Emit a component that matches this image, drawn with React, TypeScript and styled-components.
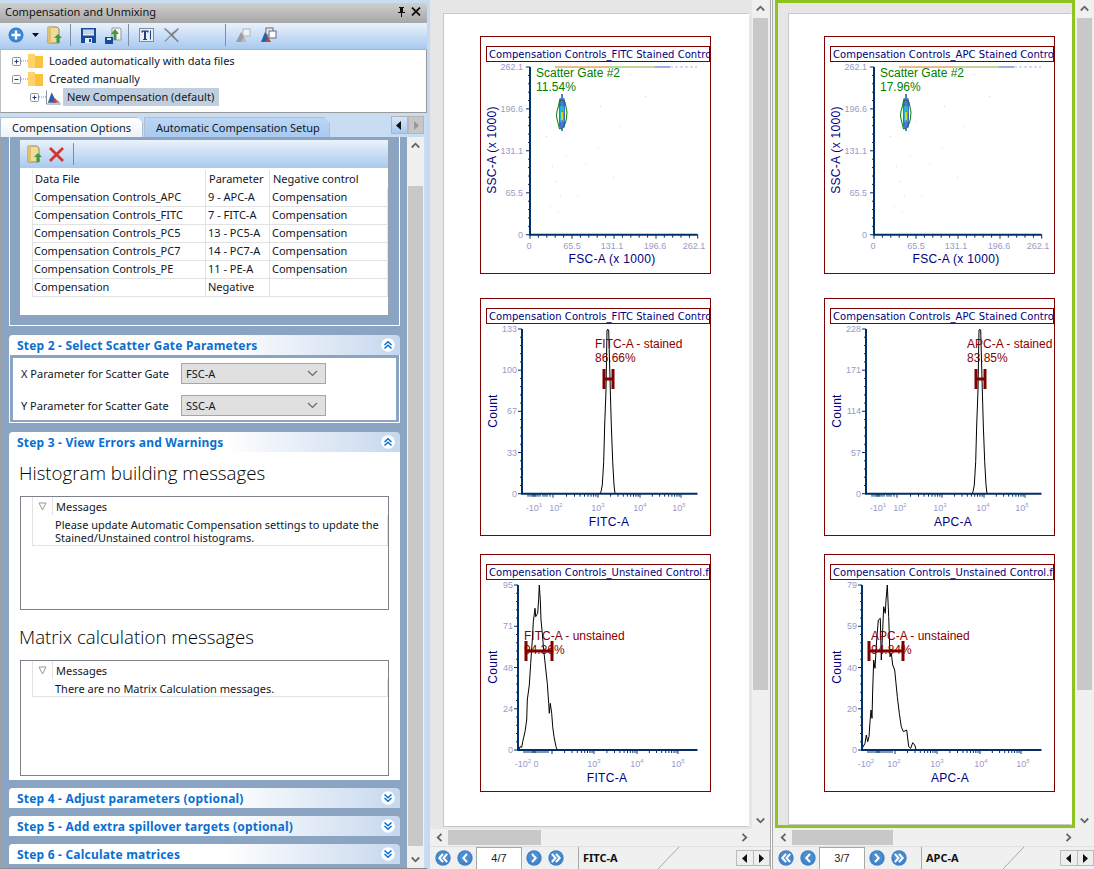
import React from "react";
import styled, { createGlobalStyle } from "styled-components";

const Global = createGlobalStyle`
  html, body { margin: 0; padding: 0; width: 1094px; height: 869px; overflow: hidden; background: #e6e6e6; }
  * { box-sizing: border-box; }
`;

const UI = `"Noto Sans", "Open Sans", sans-serif`;
const STEEL = "#8aa4c2";

const Shell = styled.div`
  display: flex; width: 1094px; height: 869px; overflow: hidden;
  font-family: ${UI}; font-size: 11px; color: #101828;
`;

/* ---------- left panel ---------- */
const LeftPanel = styled.div`
  width: 427px; height: 869px; flex: none; display: flex; flex-direction: column;
  padding-top: 3px; background: #c8dcf2;
`;
const TitleBar = styled.div`
  height: 20px; flex: none; display: flex; align-items: center; justify-content: space-between;
  padding: 0 6px 3px 5px; background: linear-gradient(#cfcfcf, #a6a6a6); color: #111; font-size: 11px;
`;
const TitleIcons = styled.div`display: flex; gap: 5px; align-items: center;`;
const Toolbar = styled.div`
  height: 27px; flex: none; display: flex; align-items: center; padding: 0 0 2px 7px;
  background: linear-gradient(#e9f2fc, #a9c9ef); border-bottom: 1px solid #9db8d8;
`;
const ToolSlot = styled.div<{ $w: number }>`
  width: ${p => p.$w}px; height: 22px; flex: none; display: flex; align-items: center; justify-content: center;
`;
const ToolSep = styled.div<{ $ml?: number; $mr?: number }>`
  width: 1px; height: 22px; flex: none; background: #7f8fa3;
  margin: 0 ${p => p.$mr ?? 0}px 0 ${p => p.$ml ?? 0}px;
`;
const Tree = styled.div`
  height: 63px; flex: none; background: #fff; border: 1px solid #9a9a9a; border-top: 0; border-left-color: #c0c0c0;
  padding-top: 2px;
`;
const TreeRow = styled.div<{ $indent: number }>`
  height: 18px; display: flex; align-items: center; padding-left: ${p => p.$indent}px;
`;
const TreeText = styled.span<{ $sel?: boolean }>`
  height: 18px; line-height: 17px; font-size: 11px; color: #101828;
  padding: 0 ${p => (p.$sel ? "5px" : "3px")} 0 ${p => (p.$sel ? "4px" : "3px")};
  margin-left: ${p => (p.$sel ? "2px" : "3px")};
  background: ${p => (p.$sel ? "#c0cfdf" : "transparent")};
`;
const TabStrip = styled.div`
  height: 21px; flex: none; margin-top: 3px; display: flex; align-items: flex-end; position: relative;
`;
const Tab = styled.div<{ $active?: boolean; $w: number }>`
  width: ${p => p.$w}px; height: 20px; flex: none; padding-left: 11px; line-height: 20px; font-size: 11px; color: #101828;
  margin-right: 1px; border: 1px solid #aebfd4; border-bottom: 0;
  clip-path: polygon(0 0, calc(100% - 6px) 0, 100% 6px, 100% 100%, 0 100%);
  background: ${p => (p.$active ? "linear-gradient(#bcd6f3, #a9c9ef)" : "linear-gradient(#fff, #eef3f9)")};
`;
const TabArrows = styled.div`
  position: absolute; right: 3px; top: 0; width: 33px; height: 18px; display: flex;
`;
const TabArrow = styled.div<{ $on?: boolean }>`
  width: 17px; height: 18px; display: flex; align-items: center; justify-content: center;
  background: ${p => (p.$on ? "linear-gradient(#d6e6f8,#a9c9ef)" : "#c6c6c6")};
  border: 1px solid #b4b4b4;
`;
const SidebarBody = styled.div`
  flex: 1; min-height: 0; display: flex; background: ${STEEL}; border-left: 1px solid #a0a0a0; border-bottom: 1px solid #8a8a8a;
`;
const StepColumn = styled.div`
  width: 406px; flex: none; padding: 0 7px 0 8px; display: flex; flex-direction: column; overflow: hidden;
`;
const Step1 = styled.div`
  height: 189px; flex: none; border: 1px solid #fff; border-top: 0; padding: 3px 10px 0 9px;
`;
const Step1Panel = styled.div`
  height: 176px; background: #fff; border: 1px solid #9aa4b0; border-top: 0; display: flex; flex-direction: column;
`;
const PanelBar = styled.div`
  height: 28px; flex: none; display: flex; align-items: center; padding-left: 7px; gap: 6px;
  background: linear-gradient(#e9f2fc, #a9c9ef);
`;
const FileTable = styled.table`
  border-collapse: collapse; table-layout: fixed; width: 356px; margin: 2px 0 0 12px; font-size: 11px; color: #101828;
`;
const Cell = styled.td<{ $w?: number }>`
  ${p => (p.$w ? `width: ${p.$w}px;` : "")} height: 18px; padding: 0 0 0 2px; line-height: 16px; white-space: nowrap; overflow: hidden;
  border-right: 1px solid #e2e2e2; border-bottom: 1px solid #e2e2e2;
  &:first-child { border-left: 1px solid #e2e2e2; padding-left: 1px; }
`;
const HeadCell = styled(Cell)`
  padding-left: 3px; border-bottom: 0; font-weight: 400; text-align: left;
  &:first-child { border-left: 1px solid #eee; padding-left: 2px; } &:last-child { border-right: 0; }
`;
const StepHeader = styled.div<{ $mt: number }>`
  height: 20px; flex: none; margin-top: ${p => p.$mt}px; padding: 0 5px 0 8px; display: flex; align-items: center; justify-content: space-between;
  border-radius: 4px 4px 0 0; background: linear-gradient(90deg, #fff 0%, #fff 55%, #c6d8ee 100%);
  color: #0a6fd0; font-weight: 700; font-size: 12px; letter-spacing: .2px;
`;
const Step2Body = styled.div`
  height: 68px; flex: none; padding: 3px 3px 3px; border: 1px solid #fff; border-top: 0;
`;
const Step2Inner = styled.div`
  background: #fff; height: 62px; padding: 5px 0 0 8px; display: flex; flex-direction: column; gap: 11px;
`;
const ParamRow = styled.div`display: flex; align-items: center; height: 21px; font-size: 11px;`;
const ParamLabel = styled.div`width: 160px; flex: none;`;
const FakeSelect = styled.div`
  width: 145px; height: 21px; background: #e0e0e0; border: 1px solid #a6a6a6; padding: 0 7px 0 4px;
  display: flex; align-items: center; justify-content: space-between; font-size: 11px;
`;
const Step3Body = styled.div`
  height: 328px; flex: none; background: #fff; padding: 9px 11px 0 10px;
`;
const Heading = styled.div<{ $mt?: number }>`
  font-family: "Open Sans", "Noto Sans", sans-serif; font-weight: 300; font-size: 18.7px; line-height: 24px; color: #000;
  margin-top: ${p => p.$mt ?? 0}px; height: 24px; white-space: nowrap;
`;
const MsgBox = styled.div<{ $h: number }>`
  height: ${p => p.$h}px; margin: 11px 0 0 1px; border: 1px solid #80808a; padding-left: 11px;
`;
const MsgHead = styled.div`
  height: 18px; display: flex; align-items: center; border-left: 1px solid #e2e2e2;
`;
const MsgTri = styled.div`
  width: 20px; height: 18px; flex: none; display: flex; align-items: center; justify-content: center; border-right: 1px solid #e2e2e2;
`;
const MsgTitle = styled.div`padding-left: 3px; font-size: 11px;`;
const MsgText = styled.div`
  padding: 3px 0 1px 22px; line-height: 13px; font-size: 11px; border-left: 1px solid #e2e2e2; border-right: 1px solid #e2e2e2;
  border-bottom: 1px solid #e2e2e2; min-height: 18px;
`;
const SideScroll = styled.div`
  width: 17px; flex: none; margin-left: 0; background: #f0f0f0; display: flex; flex-direction: column; align-items: center;
`;
const ScrollBtn = styled.div<{ $h?: number }>`
  height: ${p => p.$h ?? 17}px; width: 100%; flex: none; display: flex; align-items: center; justify-content: center;
`;
const SideThumb = styled.div`
  width: 15px; height: 660px; background: #c8c8c8; flex: none; margin-top: 32px;
`;
const LeftEdge = styled.div`width: 3px; flex: none; background: #c8dcf2;`;

/* ---------- right documents ---------- */
const Docs = styled.div`flex: 1; display: flex; background: #f0f0f0; border-left: 3px solid #c4d9f2;`;
const Doc = styled.div<{ $w: number }>`
  width: ${p => p.$w}px; flex: none; height: 869px; display: flex; flex-direction: column;
`;
const DocTop = styled.div`height: 829px; flex: none; display: flex;`;
const PageArea = styled.div<{ $selected?: boolean; $w: number; $ml?: number }>`
  width: ${p => p.$w}px; height: ${p => (p.$selected ? 828 : 829)}px; flex: none; background: #e6e6e6;
  margin-left: ${p => p.$ml ?? 0}px; padding: ${p => (p.$selected ? "10px 0 0 10px" : "13px 3px 2px 13px")};
  border: ${p => (p.$selected ? "3px solid #8fc31f" : "0")};
`;
const Page = styled.div<{ $pl: number }>`
  height: 100%; background: #fff; border: 1px solid #c8c8c8; border-right-color: #fff; padding: 22px 0 0 ${p => p.$pl}px; overflow: hidden;
`;
const VScroll = styled.div<{ $ml: number }>`
  width: 17px; flex: none; margin-left: ${p => p.$ml}px; background: #f0f0f0; display: flex; flex-direction: column;
`;
const VThumb = styled.div`height: 672px; width: 15px; margin-left: 1px; margin-top: 1px; background: #c8c8c8; flex: none;`;
const VFill = styled.div`flex: 1;`;
const HScroll = styled.div`height: 17px; flex: none; display: flex; align-items: center; background: #f0f0f0; position: relative;`;
const HBtn = styled.div<{ $ml?: number }>`
  width: 17px; flex: none; height: 17px; margin-left: ${p => p.$ml ?? 0}px; display: flex; align-items: center; justify-content: center;
`;
const HThumb = styled.div<{ $w: number }>`width: ${p => p.$w}px; height: 15px; flex: none; background: #c8c8c8;`;
const HFill = styled.div`flex: 1;`;
const Nav = styled.div`
  height: 23px; flex: none; display: flex; align-items: stretch; padding-left: 2px; background: #f0f0f0; border-top: 1px solid #e0e0e0;
`;
const NavSlot = styled.div`width: 22px; flex: none; display: flex; align-items: center; justify-content: center;`;
const PageField = styled.div`
  width: 46px; flex: none; margin-right: 1px; background: #fff; border: 1px solid #a8a8a8; border-bottom: 0; text-align: center; line-height: 20px; font-size: 11px; color: #222;
  font-family: "Liberation Sans", sans-serif;
`;
const SheetLabel = styled.div<{ $w: number }>`
  width: ${p => p.$w}px; flex: none; margin-left: 11px; padding-left: 4px; border-left: 1px solid #a8a8a8; font-weight: 700; font-size: 11px; line-height: 22px; color: #111;
`;
const Diag = styled.svg`flex: none;`;
const NavSpacer = styled.div`flex: 1;`;
const SheetArrows = styled.div`width: 34px; height: 16px; flex: none; margin-top: 3px; display: flex; border: 1px solid #bbb; background: #eee;`;
const SheetArrow = styled.div`flex: 1; display: flex; align-items: center; justify-content: center; & + & { border-left: 1px solid #bbb; }`;
const Divider = styled.div`width: 3px; flex: none; background: linear-gradient(90deg, #a8a8a8 0 1px, #fff 1px 2px, #a8a8a8 2px);`;

/* ---------- plots ---------- */
const PlotFrame = styled.div<{ $mt: number }>`
  width: 231px; height: 238px; margin-top: ${p => p.$mt}px; border: 1px solid #800000; padding-top: 9px;
  display: flex; flex-direction: column; overflow: hidden; background: #fff;
`;
const PlotTitle = styled.div`
  height: 16px; flex: none; margin-left: 5px; border: 1px solid #800000; padding: 1px 0 0 2px;
  font-family: "DejaVu Sans", sans-serif; font-size: 10px; line-height: 14px; color: #000080; white-space: nowrap; overflow: hidden; letter-spacing: 0.04px;
`;
const ChartSvg = styled.svg`display: block; flex: none; font-family: "Liberation Sans", Arial, sans-serif;`;

/* ---------- icons ---------- */
const PlusIcon = () => (
  <svg width="16" height="16" viewBox="0 0 16 16">
    <circle cx="8" cy="8" r="7.5" fill="#2f78c4" />
    <circle cx="8" cy="8" r="6.6" fill="#3f8ad6" />
    <path d="M3.5 8h9M8 3.5v9" stroke="#fff" strokeWidth="2.4" />
  </svg>
);
const Caret = () => (
  <svg width="7" height="4" viewBox="0 0 7 4"><path d="M0 0h7L3.5 4z" fill="#111" /></svg>
);
const OpenDoc = () => (
  <svg width="16" height="18" viewBox="0 0 16 18">
    <path d="M1 1h9l2 2v14H1z" fill="#f0dc98" stroke="#9a8a50" />
    <path d="M1 1h3v16H1z" fill="#e0c070" />
    <path d="M11 8l4 4h-2.5v5h-3v-5H7z" fill="#3c9a46" />
  </svg>
);
const SaveIcon = () => (
  <svg width="15" height="15" viewBox="0 0 15 15">
    <path d="M0 0h15v15H0z" fill="#1a4a9c" />
    <path d="M2 1.5h11v6H2z" fill="#dfe8f5" />
    <path d="M2 3h11M2 5h11" stroke="#9ab" strokeWidth=".7" />
    <path d="M4 10h7v5H4z" fill="#dfe8f5" />
    <path d="M8 11h2v3H8z" fill="#1a4a9c" />
  </svg>
);
const ExportIcon = () => (
  <svg width="17" height="17" viewBox="0 0 17 17">
    <path d="M7 1h8l1 1v11H7z" fill="#f4f4f4" stroke="#999" />
    <path d="M0 10h8v7H0z" fill="#1a4a9c" />
    <path d="M2 11h4v2H2z" fill="#dfe8f5" />
    <path d="M10 2l4 5h-2.5v6h-3V7H6z" fill="#3c9a46" />
  </svg>
);
const TextIcon = () => (
  <svg width="15" height="14" viewBox="0 0 15 14">
    <rect x=".5" y=".5" width="14" height="13" fill="#e8eef6" stroke="#7f8c9c" />
    <path d="M2.5 2.5h7v2h-1.3V3.8H7V11h1v1H4v-1h1V3.8H3.8v.7H2.500z" fill="#1f3f80" />
    <path d="M11.500 2.500v9" stroke="#1f3f80" />
  </svg>
);
const GrayX = () => (
  <svg width="15" height="14" viewBox="0 0 15 14"><path d="M1 0l6.500 5.500L14 0l1 1-6 6 6 6.500-1.500.5-6.500-6-6 6L.5 13l6-6L0 1z" fill="#808488" /></svg>
);
const GrayShape = () => (
  <svg width="16" height="15" viewBox="0 0 16 15">
    <rect x="8" y="1" width="7" height="7" fill="#f2f2f2" stroke="#b0b4b8" />
    <path d="M1 14L6 4l3 5 2 5z" fill="#9a9ea2" />
    <path d="M6 14l3-5 2 5z" fill="#bcbcbc" />
  </svg>
);
const ColorShape = () => (
  <svg width="17" height="16" viewBox="0 0 17 16">
    <rect x="6" y="1" width="7" height="7" fill="#eee" stroke="#667" />
    <rect x="9" y="4" width="7" height="7" fill="#fff" stroke="#667" />
    <path d="M1 15L5 5l3 5 2 5z" fill="#2d5fa8" />
    <path d="M5 15l3-5 3 5z" fill="#c8413a" />
  </svg>
);
const RedX = () => (
  <svg width="15" height="15" viewBox="0 0 15 15"><path d="M1 1l13 13M14 1L1 14" stroke="#d8322a" strokeWidth="2.800" /></svg>
);
const TreeSvg = styled.svg`flex: none;`;
const Expander = ({ minus }: { minus?: boolean }) => (
  <TreeSvg width="16" height="18" viewBox="0 0 16 18">
    <path d="M9 9h7" stroke="#888" strokeDasharray="1 1" />
    <rect x=".5" y="5.500" width="8" height="8" fill="#f8fafc" stroke="#8a94a8" rx="1" />
    <path d="M2.500 9.500h4" stroke="#223a70" />
    {!minus && <path d="M4.500 7.500v4" stroke="#223a70" />}
  </TreeSvg>
);
const Folder = () => (
  <TreeSvg width="15" height="14" viewBox="0 0 15 14">
    <path d="M0 0h6l1 2h8v12H0z" fill="#fcc23d" />
    <path d="M0 0h7v14H0z" fill="#fdd36a" />
  </TreeSvg>
);
const CompIcon = () => (
  <TreeSvg width="15" height="16" viewBox="0 0 16 16">
    <path d="M.5 1v14.500H16" stroke="#789" fill="none" />
    <path d="M2 14L6 3l3 6 2 5z" fill="#2d5fa8" />
    <path d="M7 14l2.500-5 4 5z" fill="#c8413a" />
    <path d="M11 14l1-3 3 3z" fill="#7a9ad0" />
  </TreeSvg>
);
const Chevrons = ({ up }: { up?: boolean }) => (
  <svg width="14" height="14" viewBox="0 0 14 14">
    <circle cx="7" cy="7" r="6.800" fill="#fff" />
    <g transform={up ? undefined : "rotate(180 7 7)"} stroke="#0a6fd0" strokeWidth="1.500" fill="none">
      <path d="M3.500 7l3.500-3.200L10.500 7" />
      <path d="M3.500 10.500L7 7.300l3.500 3.200" />
    </g>
  </svg>
);
const Arrow = ({ dir, c = "#666" }: { dir: "u" | "d" | "l" | "r"; c?: string }) => {
  const rot = { u: 0, r: 90, d: 180, l: 270 }[dir];
  return (
    <svg width="9" height="9" viewBox="0 0 9 9">
      <path transform={`rotate(${rot} 4.500 4.500)`} d="M.8 6.500L4.500 2.700l3.700 3.800" fill="none" stroke={c} strokeWidth="1.800" />
    </svg>
  );
};
const SolidArrow = ({ left, c = "#111" }: { left?: boolean; c?: string }) => (
  <svg width="6" height="9" viewBox="0 0 6 9"><path d={left ? "M5 0v9L0 4.500z" : "M1 0v9l5-4.500z"} fill={c} /></svg>
);
const NavCircle = ({ dbl, left }: { dbl?: boolean; left?: boolean }) => (
  <svg width="16" height="16" viewBox="0 0 16 16">
    <circle cx="8" cy="8" r="7.700" fill="#3f82c8" />
    <circle cx="8" cy="7" r="5.500" fill="#5a9ad8" opacity=".5" />
    <g transform={left ? "rotate(180 8 8)" : undefined} stroke="#fff" strokeWidth="2" fill="none">
      {dbl ? (
        <>
          <path d="M3.800 3.800L7.500 8l-3.700 4.200" />
          <path d="M8 3.800L11.700 8 8 12.200" />
        </>
      ) : (
        <path d="M6 3.800L9.700 8 6 12.200" />
      )}
    </g>
  </svg>
);

/* ---------- chart data ---------- */
const NAVY = "#003068";
const TICK = "#9a9ac8";
const AXT = "#000080";

type Pt = [number, number];
const toStr = (pts: Pt[], ox: number, oy: number, dx = 0) =>
  pts.map(([x, y]) => `${(x / 3 + ox + dx).toFixed(1)},${(y / 3 + oy).toFixed(1)}`).join(" ");

const spike: Pt[] = [[390, 611], [393, 605], [397, 585], [401, 515], [404, 405], [408, 300], [411, 120], [414, 118], [416, 120], [421, 300], [424, 405], [428, 515], [432, 585], [435, 611]];
const bellL: Pt[] = [[147, 598], [150, 590], [155, 592], [158, 575], [165, 545], [170, 510], [172, 450], [178, 405], [182, 340], [187, 270], [190, 215], [195, 175], [197, 200], [203, 190], [206, 145], [208, 105], [211, 150], [213, 210], [217, 250], [221, 300], [226, 345], [232, 400], [236, 460], [238, 490], [241, 460], [245, 490], [248, 530], [252, 560], [258, 590], [261, 598]];
const bellR: Pt[] = [[125, 598], [135, 580], [139, 555], [143, 575], [147, 560], [150, 515], [153, 480], [156, 505], [158, 420], [161, 330], [165, 355], [170, 270], [175, 210], [181, 205], [184, 330], [188, 240], [191, 170], [196, 190], [198, 150], [202, 105], [206, 200], [210, 320], [214, 310], [218, 345], [224, 360], [228, 400], [232, 440], [238, 490], [244, 530], [250, 545], [260, 540], [266, 590], [272, 595], [278, 578], [284, 585], [288, 598]];

const dots: Pt[] = [[88, 44], [150, 38], [120, 70], [84, 95], [72, 130], [75, 145], [97, 160], [133, 141], [105, 128], [118, 112], [70, 170], [80, 160], [165, 60], [66, 100], [78, 175], [92, 85], [140, 90], [86, 120]];

const TickLabel = styled.text`font-size: 9px; fill: ${TICK};`;
const AxisTitle = styled.text`font-size: 12px; fill: ${AXT}; letter-spacing: .3px;`;

const Ticks = ({ x, top, bottom, xEnd, xMajor, xMinor }: { x: number; top: number; bottom: number; xEnd: number; xMajor: number[]; xMinor: number[] }) => {
  const d: string[] = [];
  const step = (bottom - top) / 4;
  for (let i = 0; i <= 20; i++) {
    const y = top + (i * step) / 5;
    d.push(`M${x - (i % 5 === 0 ? 4 : 2)} ${y.toFixed(1)}h${i % 5 === 0 ? 4 : 2}`);
  }
  xMajor.forEach(v => d.push(`M${v} ${bottom}v4`));
  xMinor.forEach(v => d.push(`M${v.toFixed(1)} ${bottom}v3`));
  return (
    <>
      <path d={d.join("")} stroke={NAVY} strokeWidth="1" fill="none" />
      <path d={`M${x} ${top}V${bottom}H${xEnd}`} stroke={NAVY} strokeWidth="2" fill="none" />
    </>
  );
};

const Scatter = ({ x, pct }: { x: string; pct: string }) => {
  const majors = [50, 92, 134, 176, 217.7];
  const minors: number[] = [];
  majors.slice(0, -1).forEach((m, i) => { for (let k = 1; k < 5; k++) minors.push(m + (k * (majors[i + 1] - m)) / 5); });
  return (
    <>
      {dots.map(([a, b], i) => <rect key={i} x={a} y={b} width="1" height="1" fill="#d4d4e4" />)}
      <path d="M75 31H130" stroke="#d87818" strokeWidth="1" />
      <path d="M130 31H175" stroke="#88a838" strokeWidth="1" />
      <path d="M175 31H190" stroke="#3060c8" strokeWidth="1" />
      <path d="M190 31H217" stroke="#a8b8e0" strokeWidth="1" strokeDasharray="3 2" />
      <Ticks x={50} top={31} bottom={198.7} xEnd={217.7} xMajor={majors} xMinor={minors} />
      <rect x="79" y="62" width="6" height="30" rx="2" fill="#4466d8" />
      <rect x="81" y="58" width="2" height="37" fill="#5577d8" />
      <rect x="80" y="70" width="4" height="16" fill="#22b8c8" />
      <rect x="81" y="76" width="2" height="8" fill="#e0d020" />
      <path d="M82 64l3 2 1 5 1 5-.5 6-1 5-3 5-3 1-1-4-1-4-1-5 .5-5 1.500-5 1-5z" fill="none" stroke="#008000" strokeWidth="1" />
      <text x="56" y="41" fontSize="12" fill="#008000">Scatter Gate #2</text>
      <text x="56" y="55" fontSize="12" fill="#008000">{pct}</text>
      {[["262.1", 34], ["196.6", 76], ["131.1", 118], ["65.5", 160], ["0", 202]].map(([t, y]) => (
        <TickLabel key={t as string} x={43} y={y as number} textAnchor="end">{t}</TickLabel>
      ))}
      {[["0", 49], ["65.5", 92], ["131.1", 132], ["196.6", 175], ["262.1", 214]].map(([t, a]) => (
        <TickLabel key={t as string} x={a as number} y={213} textAnchor="middle">{t}</TickLabel>
      ))}
      <AxisTitle x="132" y="227" textAnchor="middle">{x} (x 1000)</AxisTitle>
      <AxisTitle transform="translate(16 114) rotate(-90)" textAnchor="middle">SSC-A (x 1000)</AxisTitle>
    </>
  );
};

const logMinor = (a: number, b: number) => [2, 3, 4, 5, 6, 7, 8, 9].map(n => a + Math.log10(n) * (b - a));

type HistCfg = {
  axisX: number; bottom: number; yLabels: string[];
  xLabels: { t: string; e?: string; x: number }[];
  xTitle: string; xTitleX: number; points: string;
  label: string; pct: string; labelX: number; labelY: number;
  m0: number; m1: number; mY: number; majors: number[]; lead: number[];
};

const Hist = ({ c }: { c: HistCfg }) => {
  const top = 31;
  const minors = [...c.lead];
  c.majors.slice(0, -1).forEach((m, i) => minors.push(...logMinor(m, c.majors[i + 1])));
  const st = (c.bottom - top) / 4;
  return (
    <>
      <polyline points={c.points} fill="none" stroke="#000" strokeWidth="1" />
      <Ticks x={c.axisX} top={top} bottom={c.bottom} xEnd={217.5} xMajor={c.majors} xMinor={minors} />
      <text x={c.labelX} y={c.labelY} fontSize="12" fill="#8b0000">{c.label}</text>
      <text x={c.labelX} y={c.labelY + 14} fontSize="12" fill="#8b0000">{c.pct}</text>
      <path d={`M${c.m0} ${c.mY - 10}v20M${c.m1} ${c.mY - 10}v20`} stroke="#800000" strokeWidth="3" />
      <path d={`M${c.m0} ${c.mY}H${c.m1}`} stroke="#800000" strokeWidth="3" />
      {c.yLabels.map((t, i) => (
        <TickLabel key={t} x={c.axisX - 5} y={top + i * st + 3} textAnchor="end">{t}</TickLabel>
      ))}
      {c.xLabels.map(l => (
        <TickLabel key={l.t + l.x} x={l.x} y={c.bottom + 17} textAnchor="middle">
          {l.t}
          {l.e && <tspan fontSize="6" dy="-4">{l.e}</tspan>}
        </TickLabel>
      ))}
      <AxisTitle x={c.xTitleX} y={c.bottom + 32} textAnchor="middle">{c.xTitle}</AxisTitle>
      <AxisTitle transform={`translate(17 ${top + 82}) rotate(-90)`} textAnchor="middle">Count</AxisTitle>
    </>
  );
};

const Plot = ({ title, mt, children }: { title: string; mt: number; children: React.ReactNode }) => (
  <PlotFrame $mt={mt}>
    <PlotTitle>{title}</PlotTitle>
    <ChartSvg width="229" height="211" viewBox="1 26 229 211">{children}</ChartSvg>
  </PlotFrame>
);

const lead2 = [48, 50, 52, 53, 54, 55, 56, 58, 60, 63, 65, 67, 70];
const histFitcS: HistCfg = {
  axisX: 42, bottom: 195.7, yLabels: ["133", "100", "67", "33", "0"],
  xLabels: [{ t: "-10", e: "1", x: 54 }, { t: "10", e: "2", x: 76 }, { t: "10", e: "3", x: 118 }, { t: "10", e: "4", x: 160 }, { t: "10", e: "5", x: 199 }],
  xTitle: "FITC-A", xTitleX: 129, points: toStr(spike, 470 - 480, 290 - 298),
  label: "FITC-A - stained", pct: "86.66%", labelX: 115, labelY: 50,
  m0: 124, m1: 133, mY: 81, majors: [73, 118, 160, 201], lead: lead2,
};
const histApcS: HistCfg = {
  ...histFitcS, yLabels: ["228", "171", "114", "57", "0"],
  xLabels: [{ t: "-10", e: "1", x: 54 }, { t: "10", e: "2", x: 76 }, { t: "10", e: "3", x: 116 }, { t: "10", e: "4", x: 159 }, { t: "10", e: "5", x: 198 }],
  xTitle: "APC-A", xTitleX: 129, points: toStr(spike, 470 - 480, 290 - 298, 28),
  label: "APC-A - stained", pct: "83.85%", labelX: 143, m0: 152, m1: 161,
};
const histFitcU: HistCfg = {
  axisX: 38, bottom: 196, yLabels: ["95", "71", "48", "24", "0"],
  xLabels: [{ t: "-10", e: "2", x: 43 }, { t: "0", x: 56 }, { t: "10", e: "3", x: 114 }, { t: "10", e: "4", x: 157 }, { t: "10", e: "5", x: 198 }],
  xTitle: "FITC-A", xTitleX: 127, points: toStr(bellL, 470 - 480, 550 - 554),
  label: "FITC-A - unstained", pct: "94.36%", labelX: 44, labelY: 86,
  m0: 46, m1: 72, mY: 97, majors: [72, 114, 157, 198], lead: [44, 46, 48, 50, 52, 53, 54, 55, 56, 58, 60, 62, 64, 66, 68],
};
const histApcU: HistCfg = {
  ...histFitcU, yLabels: ["79", "59", "40", "20", "0"],
  xLabels: [{ t: "-10", e: "2", x: 42 }, { t: "10", e: "2", x: 70 }, { t: "10", e: "3", x: 113 }, { t: "10", e: "4", x: 157 }, { t: "10", e: "5", x: 199 }],
  xTitle: "APC-A", xTitleX: 126, points: toStr(bellR, 820 - 824, 550 - 554),
  label: "APC-A - unstained", pct: "94.84%", labelX: 47, m0: 45, m1: 79, majors: [71, 113, 156, 197],
};

const rows = [
  ["Compensation Controls_APC", "9 - APC-A", "Compensation"],
  ["Compensation Controls_FITC", "7 - FITC-A", "Compensation"],
  ["Compensation Controls_PC5", "13 - PC5-A", "Compensation"],
  ["Compensation Controls_PC7", "14 - PC7-A", "Compensation"],
  ["Compensation Controls_PE", "11 - PE-A", "Compensation"],
  ["Compensation", "Negative", ""],
];

const Tri = () => (
  <svg width="9" height="9" viewBox="0 0 9 9"><path d="M1 1h7L4.500 8z" fill="none" stroke="#999" /></svg>
);
const ChevDown = () => (
  <svg width="11" height="7" viewBox="0 0 11 7"><path d="M1 1l4.500 4.500L10 1" fill="none" stroke="#666" strokeWidth="1.200" /></svg>
);

const DocNav = ({ page, label, lw, diag }: { page: string; label: string; lw: number; diag: number }) => (
  <Nav>
    <NavSlot><NavCircle dbl left /></NavSlot>
    <NavSlot><NavCircle left /></NavSlot>
    <PageField>{page}</PageField>
    <NavSlot><NavCircle /></NavSlot>
    <NavSlot><NavCircle dbl /></NavSlot>
    <SheetLabel $w={lw}>{label}</SheetLabel>
    <Diag width={diag} height="22" viewBox={`0 0 ${diag} 22`}><path d={`M0 22L${diag} 0`} stroke="#a8a8a8" /></Diag>
    <NavSpacer />
    <SheetArrows>
      <SheetArrow><SolidArrow left /></SheetArrow>
      <SheetArrow><SolidArrow /></SheetArrow>
    </SheetArrows>
  </Nav>
);

export default function App() {
  return (
    <Shell>
      <Global />
      <LeftPanel>
        <TitleBar>
          <span>Compensation and Unmixing</span>
          <TitleIcons>
            <svg width="9" height="10" viewBox="0 0 9 10"><path d="M2 0h5v1H6v4h2v1H5v4H4V6H1V5h2V1H2z" fill="#111" /></svg>
            <svg width="10" height="9" viewBox="0 0 10 9"><path d="M1 .5l8 8M9 .5l-8 8" stroke="#111" strokeWidth="1.800" /></svg>
          </TitleIcons>
        </TitleBar>
        <Toolbar>
          <ToolSlot $w={17}><PlusIcon /></ToolSlot>
          <ToolSlot $w={22}><Caret /></ToolSlot>
          <ToolSlot $w={18}><OpenDoc /></ToolSlot>
          <ToolSep $ml={6} $mr={10} />
          <ToolSlot $w={15}><SaveIcon /></ToolSlot>
          <ToolSlot $w={5} />
          <ToolSlot $w={24}><ExportIcon /></ToolSlot>
          <ToolSep $ml={3} $mr={10} />
          <ToolSlot $w={15}><TextIcon /></ToolSlot>
          <ToolSlot $w={35}><GrayX /></ToolSlot>
          <ToolSep $ml={36} $mr={9} />
          <ToolSlot $w={16}><GrayShape /></ToolSlot>
          <ToolSlot $w={34}><ColorShape /></ToolSlot>
        </Toolbar>
        <Tree>
          <TreeRow $indent={11}><Expander /><Folder /><TreeText>Loaded automatically with data files</TreeText></TreeRow>
          <TreeRow $indent={11}><Expander minus /><Folder /><TreeText>Created manually</TreeText></TreeRow>
          <TreeRow $indent={29}><Expander /><CompIcon /><TreeText $sel>New Compensation (default)</TreeText></TreeRow>
        </Tree>
        <TabStrip>
          <Tab $w={143}>Compensation Options</Tab>
          <Tab $active $w={186}>Automatic Compensation Setup</Tab>
          <TabArrows>
            <TabArrow $on><SolidArrow left /></TabArrow>
            <TabArrow><SolidArrow c="#999" /></TabArrow>
          </TabArrows>
        </TabStrip>
        <SidebarBody>
          <StepColumn>
            <Step1>
              <Step1Panel>
                <PanelBar>
                  <OpenDoc />
                  <RedX />
                  <ToolSep $ml={3} />
                </PanelBar>
                <FileTable>
                  <thead>
                    <tr>
                      <HeadCell as="th" $w={173}>Data File</HeadCell>
                      <HeadCell as="th" $w={64}>Parameter</HeadCell>
                      <HeadCell as="th" $w={118}>Negative control</HeadCell>
                    </tr>
                  </thead>
                  <tbody>
                    {rows.map(r => (
                      <tr key={r[0]}>{r.map((c, i) => <Cell key={i}>{c}</Cell>)}</tr>
                    ))}
                  </tbody>
                </FileTable>
              </Step1Panel>
            </Step1>
            <StepHeader $mt={9}>Step 2 - Select Scatter Gate Parameters<Chevrons up /></StepHeader>
            <Step2Body>
              <Step2Inner>
                <ParamRow><ParamLabel>X Parameter for Scatter Gate</ParamLabel><FakeSelect>FSC-A<ChevDown /></FakeSelect></ParamRow>
                <ParamRow><ParamLabel>Y Parameter for Scatter Gate</ParamLabel><FakeSelect>SSC-A<ChevDown /></FakeSelect></ParamRow>
              </Step2Inner>
            </Step2Body>
            <StepHeader $mt={9}>Step 3 - View Errors and Warnings<Chevrons up /></StepHeader>
            <Step3Body>
              <Heading>Histogram building messages</Heading>
              <MsgBox $h={114}>
                <MsgHead><MsgTri><Tri /></MsgTri><MsgTitle>Messages</MsgTitle></MsgHead>
                <MsgText>Please update Automatic Compensation settings to update the<br />Stained/Unstained control histograms.</MsgText>
              </MsgBox>
              <Heading $mt={15}>Matrix calculation messages</Heading>
              <MsgBox $h={116}>
                <MsgHead><MsgTri><Tri /></MsgTri><MsgTitle>Messages</MsgTitle></MsgHead>
                <MsgText>There are no Matrix Calculation messages.</MsgText>
              </MsgBox>
            </Step3Body>
            <StepHeader $mt={8}>Step 4 - Adjust parameters (optional)<Chevrons /></StepHeader>
            <StepHeader $mt={8}>Step 5 - Add extra spillover targets (optional)<Chevrons /></StepHeader>
            <StepHeader $mt={8}>Step 6 - Calculate matrices<Chevrons /></StepHeader>
          </StepColumn>
          <SideScroll>
            <ScrollBtn $h={17}><Arrow dir="u" /></ScrollBtn>
            <SideThumb />
            <VFill />
            <ScrollBtn $h={17}><Arrow dir="d" /></ScrollBtn>
          </SideScroll>
          <LeftEdge />
        </SidebarBody>
      </LeftPanel>
      <Docs>
        <Doc $w={340}>
          <DocTop>
            <PageArea $w={322}>
              <Page $pl={36}>
                <Plot title="Compensation Controls_FITC Stained Control.fcs" mt={0}><Scatter x="FSC-A" pct="11.54%" /></Plot>
                <Plot title="Compensation Controls_FITC Stained Control.fcs" mt={24}><Hist c={histFitcS} /></Plot>
                <Plot title="Compensation Controls_Unstained Control.fcs" mt={18}><Hist c={histFitcU} /></Plot>
              </Page>
            </PageArea>
            <VScroll $ml={0}>
              <ScrollBtn><Arrow dir="u" /></ScrollBtn>
              <VThumb />
              <VFill />
              <ScrollBtn><Arrow dir="d" /></ScrollBtn>
            </VScroll>
          </DocTop>
          <HScroll>
            <HBtn $ml={1}><Arrow dir="l" /></HBtn>
            <HThumb $w={93} />
            <HFill />
            <HBtn><Arrow dir="r" /></HBtn>
            <HBtn />
          </HScroll>
          <DocNav page="4/7" label="FITC-A" lw={80} diag={21} />
        </Doc>
        <Divider />
        <Doc $w={321}>
          <DocTop>
            <PageArea $selected $w={300} $ml={2}>
              <Page $pl={35}>
                <Plot title="Compensation Controls_APC Stained Control.fcs" mt={0}><Scatter x="FSC-A" pct="17.96%" /></Plot>
                <Plot title="Compensation Controls_APC Stained Control.fcs" mt={24}><Hist c={histApcS} /></Plot>
                <Plot title="Compensation Controls_Unstained Control.fcs" mt={18}><Hist c={histApcU} /></Plot>
              </Page>
            </PageArea>
            <VScroll $ml={1}>
              <ScrollBtn><Arrow dir="u" /></ScrollBtn>
              <VThumb />
              <VFill />
              <ScrollBtn><Arrow dir="d" /></ScrollBtn>
            </VScroll>
          </DocTop>
          <HScroll>
            <HBtn $ml={2}><Arrow dir="l" /></HBtn>
            <HThumb $w={101} />
            <HFill />
            <HBtn><Arrow dir="r" /></HBtn>
            <HBtn />
          </HScroll>
          <DocNav page="3/7" label="APC-A" lw={82} diag={21} />
        </Doc>
      </Docs>
    </Shell>
  );
}
